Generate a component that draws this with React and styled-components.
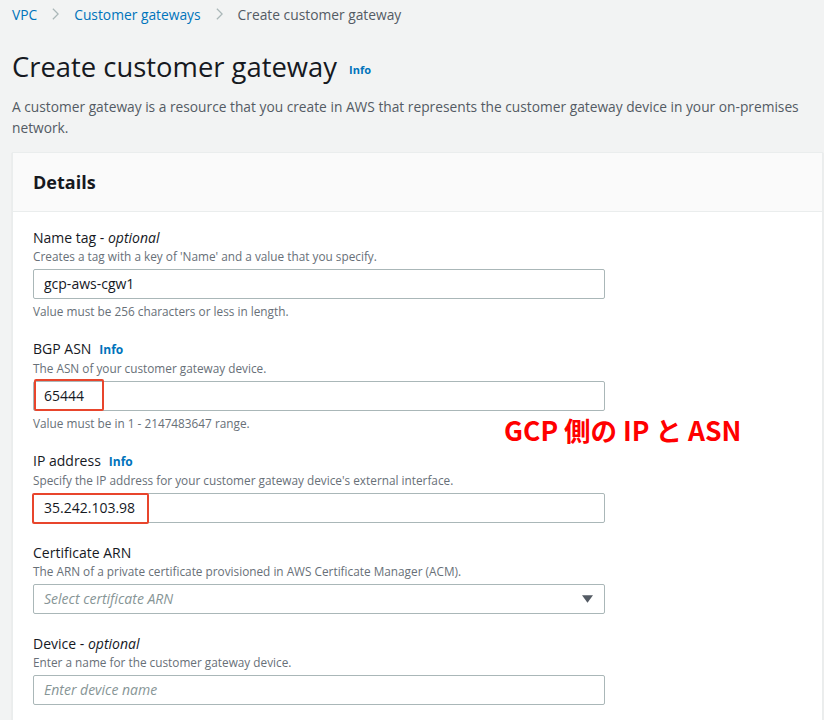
import React from 'react'
import { styled, createGlobalStyle } from 'styled-components'

const GlobalStyle = createGlobalStyle`
  body {
    margin: 0;
    background: #f2f3f3;
    font-family: "Open Sans", "Noto Sans", sans-serif;
    color: #16191f;
  }
`

function Chevron() {
  return (
    <ChevronIcon viewBox="0 0 10 16" aria-hidden="true">
      <path d="M2 2 L8 8 L2 14" fill="none" stroke="#aab7b8" strokeWidth="1.4" />
    </ChevronIcon>
  )
}

function Field({ label, optional, info, desc, helper, children }) {
  return (
    <FieldBlock>
      <Label>
        {label}
        {optional && <> - <em>optional</em></>}
        {info && <Info>Info</Info>}
      </Label>
      <Desc>{desc}</Desc>
      {children}
      {helper && <Helper>{helper}</Helper>}
    </FieldBlock>
  )
}

function App() {
  return (
    <>
      <GlobalStyle />
      <Page>
        <Breadcrumbs>
          <Crumb href="#">VPC</Crumb>
          <Chevron />
          <Crumb href="#">Customer gateways</Crumb>
          <Chevron />
          <Current>Create customer gateway</Current>
        </Breadcrumbs>

        <Title>
          Create customer gateway <TitleInfo>Info</TitleInfo>
        </Title>
        <Intro>
          A customer gateway is a resource that you create in AWS that represents the customer gateway device in your on-premises network.
        </Intro>

        <Panel>
          <PanelHeader>Details</PanelHeader>
          <PanelBody>
            <Annotation>GCP 側の IP と ASN</Annotation>

            <Field
              label="Name tag"
              optional
              desc="Creates a tag with a key of 'Name' and a value that you specify."
              helper="Value must be 256 characters or less in length."
            >
              <InputBox>gcp-aws-cgw1</InputBox>
            </Field>

            <Field
              label="BGP ASN"
              info
              desc="The ASN of your customer gateway device."
              helper="Value must be in 1 - 2147483647 range."
            >
              <InputBox>
                65444
                <Highlight $left={0} $top={-3} $width={70} $height={32} />
              </InputBox>
            </Field>

            <Field
              label="IP address"
              info
              desc="Specify the IP address for your customer gateway device's external interface."
            >
              <InputBox>
                35.242.103.98
                <Highlight $left={-2} $top={-1} $width={117} $height={31} />
              </InputBox>
            </Field>

            <Field
              label="Certificate ARN"
              desc="The ARN of a private certificate provisioned in AWS Certificate Manager (ACM)."
            >
              <InputBox $placeholder $select>
                Select certificate ARN
                <Caret viewBox="0 0 12 8" aria-hidden="true">
                  <path d="M0 0 H12 L6 8 Z" fill="#545b64" />
                </Caret>
              </InputBox>
            </Field>

            <Field
              label="Device"
              optional
              desc="Enter a name for the customer gateway device."
            >
              <InputBox $placeholder>Enter device name</InputBox>
            </Field>
          </PanelBody>
        </Panel>
      </Page>
    </>
  )
}

const Page = styled.div`
  padding: 4px 1px 0 12px;
`

const Breadcrumbs = styled.nav`
  display: flex;
  align-items: center;
  gap: 14px;
  height: 20px;
  font-size: 13.8px;
`

const ChevronIcon = styled.svg`
  width: 9px;
  height: 14px;
`

const Crumb = styled.a`
  color: #0073bb;
  text-decoration: none;
`

const Current = styled.span`
  color: #545b64;
`

const Title = styled.h1`
  margin: 25px 0 0;
  font-size: 27.4px;
  line-height: 36px;
  font-weight: 400;
  color: #16191f;
`

const TitleInfo = styled.span`
  margin-left: 5px;
  font-size: 11px;
  font-weight: 700;
  color: #0073bb;
  vertical-align: middle;
`

const Intro = styled.p`
  margin: 8px 0 0;
  font-size: 13.75px;
  line-height: 21px;
  color: #545b64;
`

const Panel = styled.section`
  margin-top: 14px;
  background: #fff;
  border: 1px solid #eaeded;
  box-shadow: 0 1px 1px rgba(0, 28, 36, 0.15);
`

const PanelHeader = styled.h2`
  margin: 0;
  padding: 0 20px;
  height: 58px;
  display: flex;
  align-items: center;
  background: #fafafa;
  border-bottom: 1px solid #eaeded;
  font-size: 18px;
  font-weight: 700;
`

const PanelBody = styled.div`
  position: relative;
  padding: 16px 20px 20px;
  display: flex;
  flex-direction: column;
  gap: 20px;
`

const FieldBlock = styled.div`
  display: flex;
  flex-direction: column;
  width: 572px;
`

const Label = styled.div`
  font-size: 14px;
  line-height: 20px;
  color: #16191f;
`

const Info = styled.span`
  margin-left: 8px;
  font-size: 12px;
  font-weight: 700;
  color: #0073bb;
`

const Desc = styled.div`
  font-size: 11.8px;
  line-height: 16px;
  color: #687078;
  white-space: nowrap;
`

const Helper = styled.div`
  margin-top: 4px;
  font-size: 11.8px;
  line-height: 16px;
  color: #687078;
`

const InputBox = styled.div`
  position: relative;
  margin-top: 5px;
  height: 30px;
  box-sizing: border-box;
  padding: 0 10px;
  display: flex;
  align-items: center;
  justify-content: ${p => (p.$select ? 'space-between' : 'flex-start')};
  border: 1px solid #aab7b8;
  border-radius: 2px;
  font-size: 14px;
  color: ${p => (p.$placeholder ? '#879596' : '#16191f')};
  font-style: ${p => (p.$placeholder ? 'italic' : 'normal')};
`

const Caret = styled.svg`
  width: 11px;
  height: 8px;
  margin-right: 1px;
`

const Highlight = styled.span`
  position: absolute;
  left: ${p => p.$left}px;
  top: ${p => p.$top}px;
  width: ${p => p.$width}px;
  height: ${p => p.$height}px;
  box-sizing: border-box;
  border: 2px solid #e8452c;
  border-radius: 2px;
`

const Annotation = styled.div`
  position: absolute;
  left: 491px;
  top: 198px;
  font-family: "Noto Sans CJK JP", "Noto Sans", sans-serif;
  font-size: 26.5px;
  font-weight: 700;
  color: #ff0000;
  white-space: nowrap;
`

export default App
